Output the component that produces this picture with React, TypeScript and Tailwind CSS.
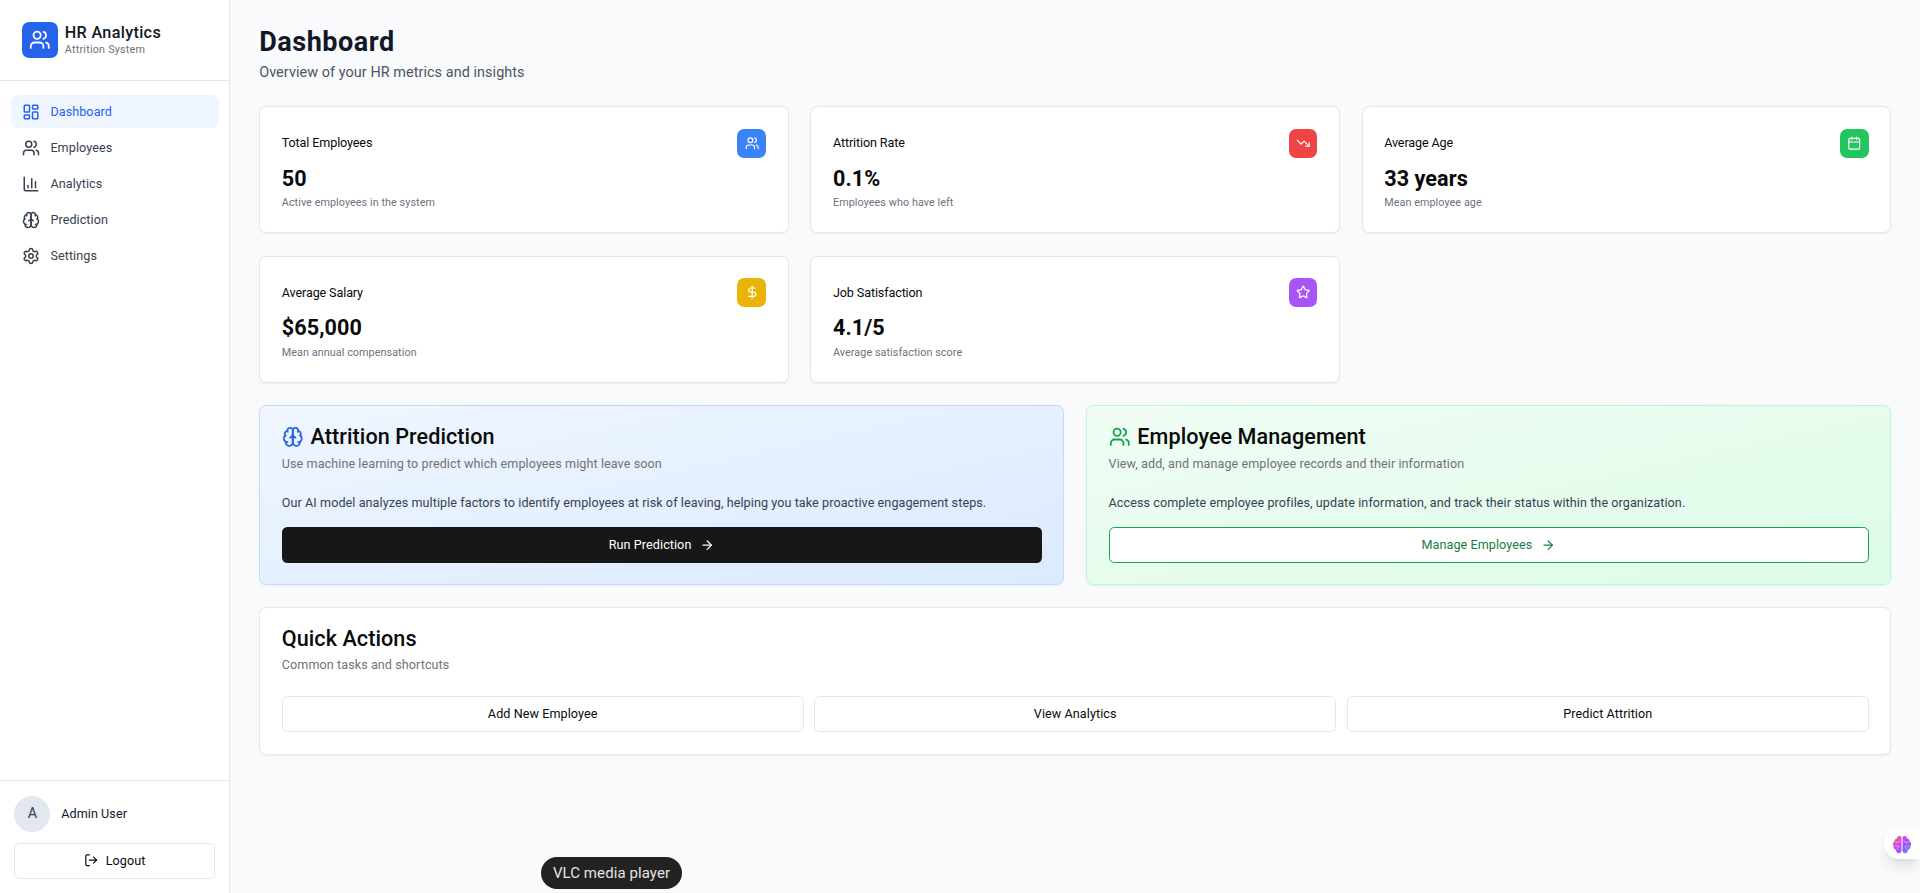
import {
  ArrowRight,
  Calendar,
  ChartColumn,
  DollarSign,
  LayoutDashboard,
  LogOut,
  Settings,
  Star,
  TrendingDown,
  Users,
} from "lucide-react";

// older two-lobed brain outline, the current package icon draws it differently
function Brain({ className }: { className?: string }) {
  return (
    <svg
      viewBox="0 0 24 24"
      fill="none"
      stroke="currentColor"
      strokeWidth="2"
      strokeLinecap="round"
      strokeLinejoin="round"
      className={className}
    >
      <path d="M12 5a3 3 0 1 0-5.997.125 4 4 0 0 0-2.526 5.77 4 4 0 0 0 .556 6.588A4 4 0 1 0 12 18Z" />
      <path d="M12 5a3 3 0 1 1 5.997.125 4 4 0 0 1 2.526 5.77 4 4 0 0 1-.556 6.588A4 4 0 1 1 12 18Z" />
      <path d="M15 13a4.5 4.5 0 0 1-3-4 4.5 4.5 0 0 1-3 4" />
      <path d="M17.599 6.5a3 3 0 0 0 .399-1.375" />
      <path d="M6.003 5.125A3 3 0 0 0 6.401 6.5" />
      <path d="M3.477 10.896a4 4 0 0 1 .585-.396" />
      <path d="M19.938 10.5a4 4 0 0 1 .585.396" />
      <path d="M6 18a4 4 0 0 1-1.967-.516" />
      <path d="M19.967 17.484A4 4 0 0 1 18 18" />
    </svg>
  );
}

const navItems = [
  { label: "Dashboard", icon: LayoutDashboard, active: true },
  { label: "Employees", icon: Users },
  { label: "Analytics", icon: ChartColumn },
  { label: "Prediction", icon: Brain },
  { label: "Settings", icon: Settings },
];

const stats = [
  { title: "Total Employees", value: "50", note: "Active employees in the system", icon: Users, color: "bg-[#3b82f6]" },
  { title: "Attrition Rate", value: "0.1%", note: "Employees who have left", icon: TrendingDown, color: "bg-[#ef4444]" },
  { title: "Average Age", value: "33 years", note: "Mean employee age", icon: Calendar, color: "bg-[#22c55e]" },
  { title: "Average Salary", value: "$65,000", note: "Mean annual compensation", icon: DollarSign, color: "bg-[#eab308]" },
  { title: "Job Satisfaction", value: "4.1/5", note: "Average satisfaction score", icon: Star, color: "bg-[#a855f7]" },
];

function StatCard({ stat }: { stat: (typeof stats)[number] }) {
  const Icon = stat.icon;
  return (
    <div className="bg-white border border-[#e5e7eb] rounded-lg shadow-xs p-6">
      <div className="flex items-center justify-between pb-2">
        <h3 className="text-sm tracking-[-0.01em] text-[#0a0a0a]">{stat.title}</h3>
        <div className={`${stat.color} p-2 rounded-lg`}>
          <Icon className="w-4 h-4 text-white" />
        </div>
      </div>
      <div className="text-2xl font-bold text-[#0a0a0a]">{stat.value}</div>
      <p className="text-xs text-[#6b7280] mt-[3px]">{stat.note}</p>
    </div>
  );
}

function BrainBadge() {
  return (
    <svg viewBox="0 0 24 24" className="w-5 h-5">
      <defs>
        <linearGradient id="brainFill" x1="0" y1="0" x2="1" y2="1">
          <stop offset="0" stopColor="#f97316" />
          <stop offset="0.35" stopColor="#d946ef" />
          <stop offset="0.7" stopColor="#8b5cf6" />
          <stop offset="1" stopColor="#38bdf8" />
        </linearGradient>
      </defs>
      <path
        fill="url(#brainFill)"
        d="M11.4 3.5a3 3 0 0 0-5.4 1.6A3.6 3.6 0 0 0 3 9a3.5 3.5 0 0 0-1 5.5A3.6 3.6 0 0 0 5 19a3.2 3.2 0 0 0 6.4 1.5ZM12.6 3.5a3 3 0 0 1 5.4 1.6A3.6 3.6 0 0 1 21 9a3.5 3.5 0 0 1 1 5.5A3.6 3.6 0 0 1 19 19a3.2 3.2 0 0 1-6.4 1.5Z"
      />
      <path
        fill="none"
        stroke="#ffffff"
        strokeOpacity="0.55"
        strokeWidth="1"
        d="M4 10h4l2-2M3.500 14.500h4.500M6 18l3-3M20 10h-4l-2-2M20.500 14.500h-4.500M18 18l-3-3"
      />
    </svg>
  );
}

export default function App() {
  return (
    <div className="relative h-screen overflow-hidden bg-[#f9fafb] tracking-[0.005em] font-['Roboto',sans-serif]">
      <div className="flex h-[992.2px] [zoom:0.9]">
        <aside className="w-64 shrink-0 bg-white border-r border-[#e5e7eb] flex flex-col">
          <div className="p-6 pb-[25px] border-b border-[#e5e7eb]">
            <div className="flex items-center gap-2">
              <div className="w-10 h-10 bg-[#2563eb] rounded-lg flex items-center justify-center">
                <Users className="w-6 h-6 text-white" />
              </div>
              <div>
                <h1 className="text-lg font-medium tracking-[0.02em] text-[#111827] leading-6">HR Analytics</h1>
                <p className="text-xs tracking-[0.02em] text-[#6b7280]">Attrition System</p>
              </div>
            </div>
          </div>

          <nav className="flex-1 px-3 py-4 space-y-1">
            {navItems.map((item) => {
              const Icon = item.icon;
              return (
                <div
                  key={item.label}
                  className={`flex items-center gap-3 px-3 py-2 rounded-lg text-sm ${
                    item.active ? "bg-[#eff6ff] text-[#2563eb]" : "text-[#374151]"
                  }`}
                >
                  <Icon className="w-5 h-5" />
                  <span>{item.label}</span>
                </div>
              );
            })}
          </nav>

          <div className="p-4 border-t border-[#e5e7eb]">
            <div className="flex items-center gap-3 mb-3">
              <div className="w-10 h-10 rounded-full bg-[#e2e8f0] flex items-center justify-center text-[#334155]">
                A
              </div>
              <span className="text-sm text-[#111827]">Admin User</span>
            </div>
            <button className="w-full h-10 flex items-center justify-center gap-2 bg-white border border-[#e5e7eb] rounded-md text-sm text-[#0a0a0a]">
              <LogOut className="w-4 h-4" />
              Logout
            </button>
          </div>
        </aside>

        <main className="flex-1 px-8 pt-[29px]">
          <div className="mb-[25px]">
            <h1 className="text-3xl font-bold tracking-[0.02em] text-[#111827]">Dashboard</h1>
            <p className="text-[#4b5563] mt-1">Overview of your HR metrics and insights</p>
          </div>

          <div className="grid grid-cols-3 gap-x-6 gap-y-[25px] mb-[25px]">
            {stats.map((stat) => (
              <StatCard key={stat.title} stat={stat} />
            ))}
          </div>

          <div className="grid grid-cols-2 gap-6 mb-6">
            <div className="bg-gradient-to-br from-[#eff6ff] to-[#dbeafe] border border-[#bfdbfe] rounded-lg shadow-xs p-6">
              <h2 className="flex items-center gap-2 -mt-0.5 text-2xl leading-none font-medium text-[#0a0a0a]">
                <Brain className="w-6 h-6 text-[#2563eb]" />
                Attrition Prediction
              </h2>
              <p className="text-sm text-[#737373] mt-2">Use machine learning to predict which employees might leave soon</p>
              <p className="text-sm text-[#374151] mt-6 mb-4">
                Our AI model analyzes multiple factors to identify employees at risk of leaving, helping you take proactive engagement steps.
              </p>
              <button className="w-full h-10 flex items-center justify-center gap-2.5 bg-[#171717] rounded-md text-sm text-white">
                Run Prediction
                <ArrowRight className="w-4 h-4" />
              </button>
            </div>

            <div className="bg-gradient-to-br from-[#f0fdf4] to-[#dcfce7] border border-[#bbf7d0] rounded-lg shadow-xs p-6">
              <h2 className="flex items-center gap-2 -mt-0.5 text-2xl leading-none font-medium text-[#0a0a0a]">
                <Users className="w-6 h-6 text-[#16a34a]" />
                Employee Management
              </h2>
              <p className="text-sm text-[#737373] mt-2">View, add, and manage employee records and their information</p>
              <p className="text-sm text-[#374151] mt-6 mb-4">
                Access complete employee profiles, update information, and track their status within the organization.
              </p>
              <button className="w-full h-10 flex items-center justify-center gap-2.5 bg-white border border-[#16a34a] rounded-md text-sm text-[#15803d]">
                Manage Employees
                <ArrowRight className="w-4 h-4" />
              </button>
            </div>
          </div>

          <div className="bg-white border border-[#e5e7eb] rounded-lg shadow-xs p-6">
            <h2 className="-mt-0.5 text-2xl leading-none font-medium text-[#0a0a0a]">Quick Actions</h2>
            <p className="text-sm text-[#737373] mt-2">Common tasks and shortcuts</p>
            <div className="grid grid-cols-3 gap-3 mt-6">
              {["Add New Employee", "View Analytics", "Predict Attrition"].map((label) => (
                <button
                  key={label}
                  className="h-10 bg-white border border-[#e5e7eb] rounded-md text-sm text-[#0a0a0a]"
                >
                  {label}
                </button>
              ))}
            </div>
          </div>
        </main>
      </div>

      {/* overlays from outside the app */}
      <div className="absolute left-[541px] bottom-1 h-[32px] w-[141px] flex items-center justify-center bg-[#222222] rounded-full text-[15px] text-[#e5e5e5]">
        VLC media player
      </div>
      <div className="absolute right-0 top-[829px] w-9 h-[30px] pl-2 flex items-center bg-white rounded-l-full shadow-lg">
        <BrainBadge />
      </div>
    </div>
  );
}
